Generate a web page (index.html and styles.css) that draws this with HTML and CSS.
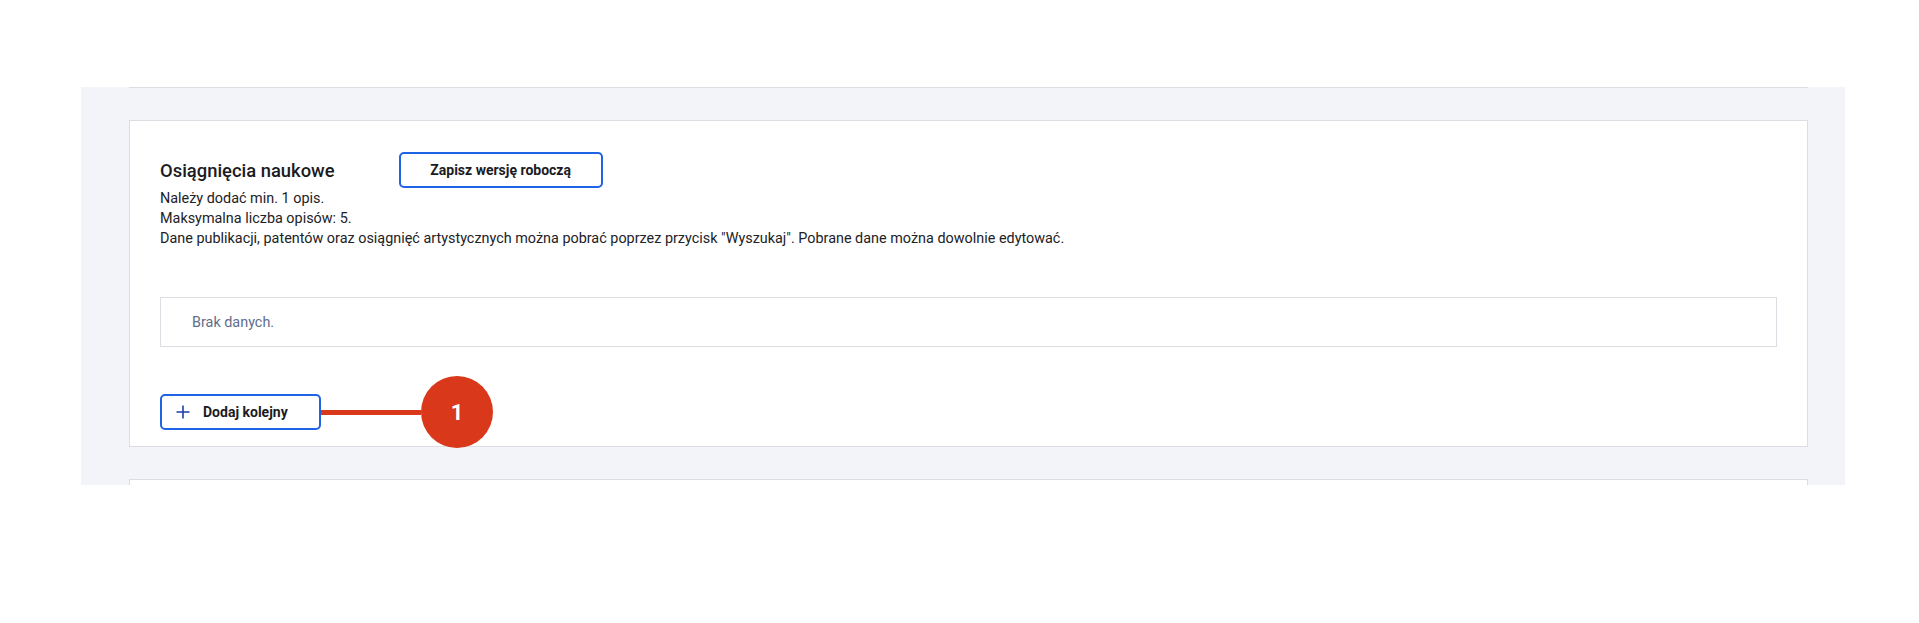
FILE: index.html
```html
<!DOCTYPE html>
<html lang="pl">
<head>
  <meta charset="UTF-8">
  <meta name="viewport" content="width=device-width, initial-scale=1.0">
  <title>Osiągnięcia naukowe</title>
  <link rel="stylesheet" href="styles.css">
</head>
<body>

  <div class="page">
    <div class="panel">
      <div class="card card-prev"></div>

      <div class="card">
        <div class="card-head">
          <h2>Osiągnięcia naukowe</h2>
          <button class="btn btn-draft">Zapisz wersję roboczą</button>
        </div>

        <div class="info">
          <p>Należy dodać min. 1 opis.</p>
          <p>Maksymalna liczba opisów: 5.</p>
          <p>Dane publikacji, patentów oraz osiągnięć artystycznych można pobrać poprzez przycisk "Wyszukaj". Pobrane dane można dowolnie edytować.</p>
        </div>

        <div class="empty-box">Brak danych.</div>

        <div class="add-row">
          <button class="btn btn-add">
            <svg class="plus" width="14" height="14" viewBox="0 0 14 14">
              <path d="M7 0.5V13.5M0.5 7H13.5" stroke="#1d3fa8" stroke-width="1.6" fill="none"/>
            </svg>
            Dodaj kolejny
          </button>
          <div class="marker">
            <span class="marker-line"></span>
            <span class="marker-dot">1</span>
          </div>
        </div>
      </div>

      <div class="card card-next"></div>
    </div>
  </div>

</body>
</html>
```

FILE: styles.css
```css
body {
  margin: 0;
  padding: 0;
  background-color: #fff;
  font-family: 'Roboto', 'Liberation Sans', sans-serif;
  color: #1b1b1f;
}

.page {
  padding: 87px 74px 0 81px;
}

.panel {
  background-color: #f3f4f9;
  height: 398px;
  overflow: hidden;
  padding: 0 37px 0 48px;
  display: flex;
  flex-direction: column;
  gap: 32px;
}

.card {
  background-color: #fff;
  border: 1px solid #dcdde3;
  padding: 31px 30px 16px 30px;
}

.card-prev {
  margin-top: -69px;
  height: 68px;
  padding: 0;
  flex-shrink: 0;
}

.card-next {
  height: 40px;
  padding: 0;
  flex-shrink: 0;
}

.card-head {
  display: flex;
  align-items: center;
}

.card-head h2 {
  margin: 0 64px 0 0;
  font-size: 18.4px;
  font-weight: 500;
  color: #1b1b1f;
}

.btn {
  background-color: #fff;
  border: 2px solid #1f63e6;
  border-radius: 5px;
  font-family: inherit;
  font-size: 14px;
  font-weight: 700;
  color: #1b1b1f;
  cursor: pointer;
  height: 36px;
}

.btn-draft {
  width: 204px;
}

.info {
  margin-top: 1px;
}

.info p {
  margin: 0;
  font-size: 14.4px;
  line-height: 20px;
  color: #222226;
}

.empty-box {
  margin-top: 48px;
  height: 48px;
  border: 1px solid #dcdde3;
  padding-left: 31px;
  display: flex;
  align-items: center;
  font-size: 14.4px;
  color: #5f6e8c;
}

.add-row {
  margin-top: 47px;
  position: relative;
  display: flex;
  align-items: center;
}

.btn-add {
  width: 161px;
  display: flex;
  align-items: center;
  gap: 13px;
  padding: 0 0 0 14px;
}

.marker {
  position: absolute;
  left: 161px;
  top: 50%;
  transform: translateY(-50%);
  display: flex;
  align-items: center;
}

.marker-line {
  width: 100px;
  height: 5px;
  background-color: #d9381a;
}

.marker-dot {
  width: 72px;
  height: 72px;
  border-radius: 50%;
  background-color: #d9381a;
  color: #fff;
  font-size: 22px;
  font-weight: 700;
  display: flex;
  align-items: center;
  justify-content: center;
}
```
